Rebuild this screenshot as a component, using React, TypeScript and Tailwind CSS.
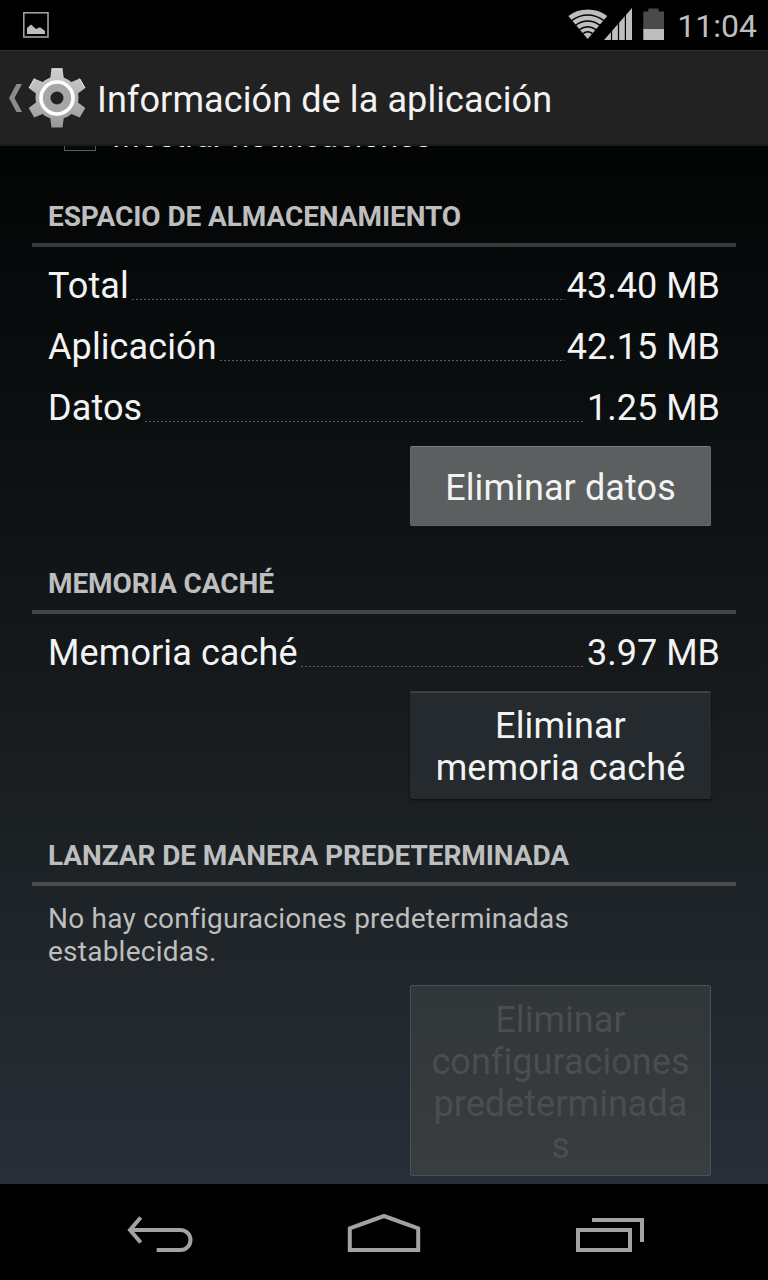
import React from "react";

function StatusBar() {
  return (
    <div className="flex h-[50px] shrink-0 items-center justify-between bg-black pl-[23px] pr-[11px]">
      <svg width="26" height="26" viewBox="0 0 26 26" fill="none">
        <rect x="0.8" y="0.8" width="24.2" height="24.2" stroke="#a9a9a9" strokeWidth="1.5" />
        <path d="M4 22V16L8 12.6 13 17 17 15.2 22 19V22Z" fill="#bdbdbd" />
      </svg>
      <div className="flex items-center">
        <svg width="98" height="50" viewBox="568 0 98 50">
          <path d="M587.7 39 568.3 16Q577 9.6 587.7 9.6 598.5 9.6 607.3 16Z" fill="#bebebe" />
          <g fill="none" stroke="#000" strokeWidth="1.5">
            <path d="M571.5 20.7Q587.7 9.5 604 20.7" />
            <path d="M575.5 25.4Q587.7 16.8 600 25.4" />
            <path d="M579.5 29.6Q587.7 24 596 29.6" />
            <path d="M583 33.6Q587.7 30 592.5 33.6" />
          </g>
          <path d="M604 40 632 8V40Z" fill="#bebebe" />
          <path d="M611.5 8V40M618.5 8V40M625.4 8V40" stroke="#000" strokeWidth="1.2" />
          <path d="M643.3 11.5H648.3V8.4H658.5V11.5H664V30H643.3Z" fill="#4a4a4a" />
          <path d="M643.3 29H664V40H643.3Z" fill="#bebebe" />
        </svg>
        <span className="ml-[11px] mt-[2px] text-[32px] leading-[38px] text-[#bebebe]">11:04</span>
      </div>
    </div>
  );
}

function Gear() {
  return (
    <svg width="58" height="60" viewBox="-29 -30 58 60" className="ml-[5px]">
      <defs>
        <linearGradient id="metal" x1="0" y1="-30" x2="0" y2="30" gradientUnits="userSpaceOnUse">
          <stop offset="0" stopColor="#cfcfcf" />
          <stop offset="1" stopColor="#989898" />
        </linearGradient>
      </defs>
      <g fill="url(#metal)">
        <circle r="21.5" />
      </g>
      <path
        fill="url(#metal)"
        d="M-5.5-29.5H5.5L7-18H-7ZM-5.5 29.5H5.5L7 18H-7ZM22.8-19.5 28.3-10 19-3 12-15ZM-22.8-19.5-28.3-10-19-3-12-15ZM22.8 19.5 28.3 10 19 3 12 15ZM-22.8 19.5-28.3 10-19 3-12 15Z"
      />
      <path d="M-5.5-29.2H5.5M-28-10-22.6-19.4M22.6-19.4 28-10" stroke="#eee" strokeWidth="0.9" />
      <circle r="16" fill="#a6a6a6" stroke="#fff" strokeWidth="3.6" />
      <circle r="6.5" fill="#222" />
    </svg>
  );
}

function ActionBar() {
  return (
    <div className="flex h-24 shrink-0 items-center border-b-2 border-t border-b-[#191b1b] border-t-[#303030] bg-[#222222] pl-[8px]">
      <svg width="15" height="28" viewBox="0 0 15 28">
        <path d="M8.5 0H14L6.5 14 14 28H8.5L1 14Z" fill="#8b8b8b" />
      </svg>
      <Gear />
      <h1 className="ml-[11px] mt-[5px] text-[36px] leading-[42px] tracking-[0.1px] text-[#f3f3f3]">
        Información de la aplicación
      </h1>
    </div>
  );
}

function Heading({ children }: { children: React.ReactNode }) {
  return (
    <h2 className="mx-8 h-[47px] border-b-4 border-[#ffffff33] pl-4 text-[28px] font-bold leading-[33px] tracking-[-0.09px] text-[#bebebe]">
      {children}
    </h2>
  );
}

function Row({ label, value }: { label: string; value: string }) {
  return (
    <div className="ml-12 mr-[48px] flex h-[61px] items-center pb-[2px] text-[36px] leading-[42px] text-[#f3f3f3]">
      <span className="tracking-[0.1px]">{label}</span>
      <span className="ml-[3px] mr-[2px] mt-[28px] h-px flex-1 bg-[repeating-linear-gradient(90deg,#5a5d5e_0px,#5a5d5e_2px,transparent_2px,transparent_4px)]" />
      <span>{value}</span>
    </div>
  );
}

function NavBar() {
  return (
    <div className="flex h-24 shrink-0 items-center justify-center bg-black">
      <svg width="768" height="96" viewBox="0 1184 768 96" fill="none" stroke="#a3a3a3" strokeWidth="4">
        <path d="M130 1230H180.500A10 10 0 0 1 180.500 1250H156.700" />
        <path d="M140.700 1217.500 130 1230 140.700 1242.500" />
        <path d="M349.800 1228.300 384 1216 418.200 1228.300V1250H349.800Z" />
        <path d="M578 1230H630V1250H578Z" />
        <path d="M592 1220H642V1242" />
      </svg>
    </div>
  );
}

export default function App() {
  return (
    <div className="flex h-[1280px] w-[768px] flex-col overflow-hidden bg-black font-['Roboto',sans-serif]">
      <StatusBar />
      <ActionBar />
      <main className="flex h-[1038px] flex-col overflow-hidden bg-[linear-gradient(180deg,#030505_0%,#0b0e0f_25%,#171b1e_55%,#20262a_78%,#272e37_100%)]">
        <div className="-mt-[27px] flex h-[42px] shrink-0 items-start pl-16">
          <div className="h-8 w-8 border border-[#5a5d5f] bg-[#05090b]" />
          <span className="-mt-[4px] ml-[16px] text-[32px] leading-[42px] text-[#f3f3f3]">Mostrar notificaciones</span>
        </div>
        <section className="mt-[39px] shrink-0">
          <Heading>ESPACIO DE ALMACENAMIENTO</Heading>
          <div className="mt-[9px]">
            <Row label="Total" value="43.40 MB" />
            <Row label="Aplicación" value="42.15 MB" />
            <Row label="Datos" value="1.25 MB" />
          </div>
          <button className="ml-[410px] mt-[7px] block h-20 w-[301px] rounded-[2px] border border-[#656868] border-t-[#777a7a] bg-[#5c5f60] pt-[4px] text-[36px] leading-[42px] tracking-[0.1px] text-[#f3f3f3]">
            Eliminar datos
          </button>
        </section>
        <section className="mt-[41px] shrink-0">
          <Heading>MEMORIA CACHÉ</Heading>
          <div className="mt-[9px]">
            <Row label="Memoria caché" value="3.97 MB" />
          </div>
          <button className="ml-[410px] mt-[7px] block h-[108px] w-[301px] rounded-[2px] border-t-2 border-[#3a4144] bg-[#242a2d] pt-[2px] text-[36px] leading-[42px] tracking-[0.1px] text-[#f3f3f3] shadow-[0_1px_2px_#0b0e10]">
            Eliminar
            <br />
            memoria caché
          </button>
        </section>
        <section className="mt-10 shrink-0">
          <Heading>LANZAR DE MANERA PREDETERMINADA</Heading>
          <p className="ml-12 mt-4 w-[600px] text-[28px] leading-[33px] tracking-[0.24px] text-[#bebebe]">
            No hay configuraciones predeterminadas
            <br />
            establecidas.
          </p>
          <button
            disabled
            className="ml-[410px] mt-[17px] block h-[191px] w-[301px] rounded-[2px] border border-[#4b5053] bg-[linear-gradient(180deg,#313638,#393d40)] pt-[4px] text-[36px] leading-[42px] tracking-[0.05px] text-[#4b4d4f]"
          >
            Eliminar
            <br />
            configuraciones
            <br />
            predeterminada
            <br />s
          </button>
        </section>
      </main>
      <NavBar />
    </div>
  );
}
